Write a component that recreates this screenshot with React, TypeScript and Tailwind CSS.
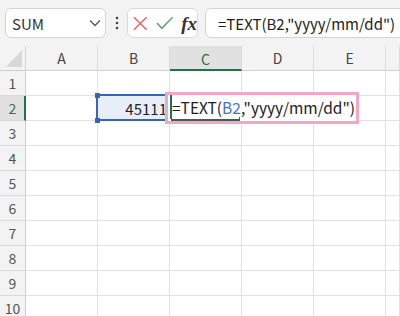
import React from "react";

const font = "font-['Noto_Sans_CJK_JP','Noto_Sans',sans-serif]";
const cols = ["A", "B", "C", "D", "E", ""];
const rows = [1, 2, 3, 4, 5, 6, 7, 8, 9, 10];

function Toolbar() {
  return (
    <div className="flex h-[46px] items-start bg-[#f3f3f3] pt-[8px]">
      <div className="ml-[5px] flex h-[30px] w-[101px] shrink-0 items-center justify-between rounded-[6px] border border-[#d3d3d3] bg-white pl-[6px] pr-[4px]">
        <span className="text-[15px] leading-none text-[#333]">SUM</span>
        <svg width="12" height="8" viewBox="0 0 12 8">
          <polyline points="1,1.5 6,6.5 11,1.5" fill="none" stroke="#555" strokeWidth="1.3" />
        </svg>
      </div>
      <div className="flex h-[30px] w-[21px] shrink-0 items-center justify-center">
        <svg width="4" height="14" viewBox="0 0 4 14">
          <circle cx="2" cy="2" r="1.3" fill="#444" />
          <circle cx="2" cy="7" r="1.3" fill="#444" />
          <circle cx="2" cy="12" r="1.3" fill="#444" />
        </svg>
      </div>
      <div className="flex h-[30px] w-[71px] shrink-0 items-center rounded-[6px] border border-[#dadada] bg-white pl-[5px]">
        <svg width="15" height="15" viewBox="0 0 15 15">
          <path d="M1 1 L14 14 M14 1 L1 14" stroke="#d66a6a" strokeWidth="1.5" fill="none" />
        </svg>
        <svg width="18" height="14" viewBox="0 0 18 14" className="ml-[8px]">
          <polyline points="1,7 6,12.5 17,1" stroke="#5aa56c" strokeWidth="1.5" fill="none" />
        </svg>
        <span className="ml-[8px] font-['Liberation_Serif',serif] text-[19px] font-bold italic leading-none text-[#333]">
          fx
        </span>
      </div>
      <div className="ml-[7px] flex h-[30px] w-[220px] shrink-0 items-center rounded-l-[6px] border border-[#d3d3d3] bg-white pl-[12px]">
        <span className="whitespace-nowrap text-[15px] leading-none text-[#222]">
          =TEXT(B2,"yyyy/mm/dd")
        </span>
      </div>
    </div>
  );
}

function Grid() {
  return (
    <div className="grid grid-cols-[26px_72px_72px_72px_72px_72px_1fr] auto-rows-[25px]">
      <div className="relative border-b border-r border-[#d0d0d0] bg-[#f3f3f3]">
        <svg width="26" height="25" viewBox="0 0 26 25" className="absolute left-0 top-0">
          <polygon points="22,4 22,21 6,21" fill="#d8d8d8" />
        </svg>
      </div>
      {cols.map((c, i) => (
        <div
          key={"h" + i}
          className={
            c === "C"
              ? "flex items-center justify-center border-b-2 border-r border-b-[#217346] border-r-[#d6d6d6] bg-[#e1e1e1] pt-[2px] text-[14px] leading-none text-[#217346]"
              : "flex items-center justify-center border-b border-r border-b-[#d0d0d0] border-r-[#dcdcdc] bg-[#f3f3f3] text-[14px] leading-none text-[#444]"
          }
        >
          {c}
        </div>
      ))}
      {rows.map((r) => (
        <React.Fragment key={r}>
          <div
            className={
              r === 2
                ? "flex items-center justify-center border-b border-r-2 border-b-[#d6d6d6] border-r-[#217346] bg-[#e1e1e1] pl-[1px] text-[14px] leading-none text-[#3b6e50]"
                : "flex items-center justify-center border-b border-r border-b-[#dadada] border-r-[#cfcfcf] bg-[#f3f3f3] text-[14px] leading-none text-[#555]"
            }
          >
            {r}
          </div>
          {cols.map((c, i) => (
            <div
              key={c + i}
              className={
                r === 2 && c === "B"
                  ? "flex items-center justify-end border-b border-r border-[#e1e1e1] bg-[#e8eef8] pr-[2px] text-[15px] leading-none text-[#222]"
                  : "border-b border-r border-[#e1e1e1]"
              }
            >
              {r === 2 && c === "B" ? "45111" : null}
            </div>
          ))}
        </React.Fragment>
      ))}
    </div>
  );
}

export default function App() {
  return (
    <div className={`relative h-[316px] w-[400px] overflow-hidden bg-white ${font}`}>
      <Toolbar />
      <Grid />
      {/* selection on B2 */}
      <div className="absolute left-[96px] top-[94px] h-[27px] w-[74px] border-2 border-[#3565b5]" />
      <div className="absolute left-[95px] top-[93px] h-[5px] w-[5px] bg-[#3565b5]" />
      <div className="absolute left-[95px] top-[118px] h-[5px] w-[5px] bg-[#3565b5]" />
      {/* editing C2, highlighted */}
      <div className="absolute left-[165px] top-[92px] h-[32px] w-[194px] border-[3px] border-[#f2a7c4] bg-white">
        <div className="absolute left-[2px] top-0 h-[24px] w-[2px] bg-[#217346]" />
        <div className="absolute left-[3px] top-[24px] h-[2px] w-[69px] bg-[#4a5a50]" />
        <div className="absolute left-[71px] top-[22px] h-[3px] w-[1px] bg-[#4a5a50]" />
        <div className="flex h-full items-center whitespace-nowrap pl-[4px] text-[15.5px] leading-none text-[#222]">
          =TEXT(<span className="text-[#4472c4]">B2</span>,"yyyy/mm/dd")
        </div>
      </div>
    </div>
  );
}
